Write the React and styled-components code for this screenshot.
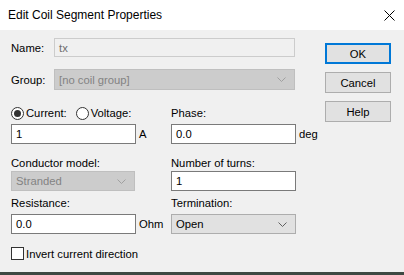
import styled, { createGlobalStyle } from 'styled-components'

const Global = createGlobalStyle`
    html, body { margin: 0; padding: 0; background: #f0f0f0; }
    body { font-family: "Liberation Sans", Arial, sans-serif; }
`

const Dialog = styled.div`
    width: 404px;
    height: 275px;
    display: flex;
    flex-direction: column;
    background: #f0f0f0;
    overflow: hidden;
`

const TitleBar = styled.div`
    height: 30px;
    flex: none;
    background: #ffffff;
    display: flex;
    align-items: center;
    justify-content: space-between;
    padding: 0 9px 0 8px;
    font-size: 12px;
    color: #000;
`

const Body = styled.div`
    flex: 1;
    display: flex;
    border-bottom: 3px solid #3e4842;
    font-size: 11.25px;
    color: #000;
`

const Form = styled.div`
    width: 314px;
    padding: 8px 0 0 11px;
    display: flex;
    flex-direction: column;
`

const Buttons = styled.div`
    width: 66px;
    padding-top: 13px;
    display: flex;
    flex-direction: column;
    gap: 8px;
`

const Button = styled.div`
    height: 21px;
    box-sizing: border-box;
    display: flex;
    align-items: center;
    justify-content: center;
    background: #e1e1e1;
    border: ${p => (p.$default ? '2px solid #0078d7' : '1px solid #adadad')};
`

const LineRow = styled.div`
    display: flex;
    align-items: center;
    margin-top: ${p => p.$mt || 0}px;
`

const SideLabel = styled.span`
    width: 43px;
`

const WideBox = styled.div`
    width: 241px;
    height: ${p => p.$h}px;
    box-sizing: border-box;
    display: flex;
    align-items: center;
    justify-content: space-between;
    padding: 0 8px 0 4px;
    color: ${p => (p.$select ? '#838383' : '#6d6d6d')};
    background: ${p => (p.$select ? '#cccccc' : '#f0f0f0')};
    border: 1px solid ${p => (p.$select ? '#bfbfbf' : '#cccccc')};
`

const Pair = styled.div`
    display: grid;
    grid-template-columns: 160px 1fr;
    margin-top: ${p => p.$mt}px;
`

const Field = styled.div`
    display: flex;
    flex-direction: column;
    gap: ${p => p.$gap}px;
`

const Label = styled.div`
    height: 13px;
    line-height: 13px;
    display: flex;
    align-items: center;
    white-space: nowrap;
`

const Control = styled.div`
    display: flex;
    align-items: center;
    gap: 3px;
`

const TextBox = styled.div`
    width: 125px;
    height: 20px;
    box-sizing: border-box;
    display: flex;
    align-items: center;
    padding-left: 4px;
    background: #ffffff;
    border: 1px solid #7a7a7a;
`

const Combo = styled.div`
    width: ${p => (p.$disabled ? 124 : 125)}px;
    height: 20px;
    box-sizing: border-box;
    display: flex;
    align-items: center;
    justify-content: space-between;
    padding: 0 8px 0 4px;
    color: ${p => (p.$disabled ? '#838383' : '#000')};
    background: ${p => (p.$disabled ? '#cccccc' : '#e1e1e1')};
    border: 1px solid ${p => (p.$disabled ? '#bfbfbf' : '#adadad')};
`

const Radio = styled.span`
    width: 13px;
    height: 13px;
    box-sizing: border-box;
    border-radius: 50%;
    border: 1px solid #333;
    background: #fff;
    display: inline-flex;
    align-items: center;
    justify-content: center;
    margin-right: 2px;
    &::after {
        content: '';
        width: 7px;
        height: 7px;
        border-radius: 50%;
        background: ${p => (p.$checked ? '#333' : 'transparent')};
    }
`

const RadioOption = styled.span`
    display: inline-flex;
    align-items: center;
    margin-right: ${p => p.$mr || 0}px;
`

const Check = styled.span`
    width: 13px;
    height: 13px;
    box-sizing: border-box;
    border: 1px solid #333;
    background: #fff;
    margin-right: 2px;
`

const Chevron = ({ color = '#8a8a8a' }) => (
    <svg width="9" height="5" viewBox="0 0 9 5">
        <path d="M0.5 0.5 L4.5 4.5 L8.5 0.5" fill="none" stroke={color} strokeWidth="1" />
    </svg>
)

export default function App() {
    return (
        <>
            <Global />
            <Dialog>
                <TitleBar>
                    <span>Edit Coil Segment Properties</span>
                    <svg width="11" height="11" viewBox="0 0 11 11">
                        <path d="M0.5 0.5 L10.5 10.5 M10.5 0.5 L0.5 10.5" stroke="#000" strokeWidth="1" />
                    </svg>
                </TitleBar>
                <Body>
                    <Form>
                        <LineRow>
                            <SideLabel>Name:</SideLabel>
                            <WideBox $h={19}>tx</WideBox>
                        </LineRow>
                        <LineRow $mt={12}>
                            <SideLabel>Group:</SideLabel>
                            <WideBox $h={21} $select>
                                <span>[no coil group]</span>
                                <Chevron color="#a0a0a0" />
                            </WideBox>
                        </LineRow>

                        <Pair $mt={17}>
                            <Field $gap={4}>
                                <Label>
                                    <RadioOption $mr={9}><Radio $checked />Current:</RadioOption>
                                    <RadioOption><Radio />Voltage:</RadioOption>
                                </Label>
                                <Control><TextBox>1</TextBox>A</Control>
                            </Field>
                            <Field $gap={4}>
                                <Label>Phase:</Label>
                                <Control><TextBox>0.0</TextBox>deg</Control>
                            </Field>
                        </Pair>

                        <Pair $mt={13}>
                            <Field $gap={1}>
                                <Label>Conductor model:</Label>
                                <Control>
                                    <Combo $disabled>
                                        <span>Stranded</span>
                                        <Chevron color="#a0a0a0" />
                                    </Combo>
                                </Control>
                            </Field>
                            <Field $gap={1}>
                                <Label>Number of turns:</Label>
                                <Control><TextBox>1</TextBox></Control>
                            </Field>
                        </Pair>

                        <Pair $mt={6}>
                            <Field $gap={4}>
                                <Label>Resistance:</Label>
                                <Control><TextBox>0.0</TextBox>Ohm</Control>
                            </Field>
                            <Field $gap={4}>
                                <Label>Termination:</Label>
                                <Control>
                                    <Combo>
                                        <span>Open</span>
                                        <Chevron color="#606060" />
                                    </Combo>
                                </Control>
                            </Field>
                        </Pair>

                        <LineRow $mt={13}>
                            <Check />
                            <span>Invert current direction</span>
                        </LineRow>
                    </Form>
                    <Buttons>
                        <Button $default>OK</Button>
                        <Button>Cancel</Button>
                        <Button>Help</Button>
                    </Buttons>
                </Body>
            </Dialog>
        </>
    )
}
